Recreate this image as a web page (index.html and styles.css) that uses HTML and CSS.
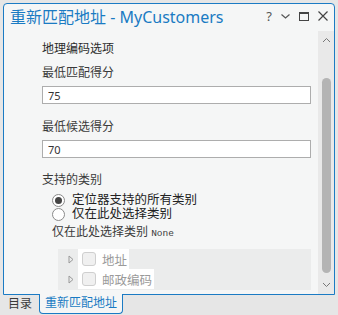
FILE: index.html
```html
<!DOCTYPE html>
<html>
<head>
  <title>重新匹配地址</title>
  <link rel="stylesheet" href="styles.css">
</head>
<body>
  <div class="pane">
    <div class="title-bar">
      <div class="title">重新匹配地址 - MyCustomers</div>
      <div class="title-tools">
        <span class="tool-help">?</span>
        <svg class="tool" width="9" height="10" viewBox="0 0 9 10"><path d="M0.5 3.5 L4.5 7 L8.5 3.5" fill="none" stroke="#555" stroke-width="1.2"/></svg>
        <svg class="tool" width="10" height="10" viewBox="0 0 10 10"><rect x="0.5" y="1.5" width="9" height="8" fill="none" stroke="#444" stroke-width="1"/><rect x="0.5" y="1" width="9" height="2" fill="#444"/></svg>
        <svg class="tool" width="10" height="10" viewBox="0 0 10 10"><path d="M0.5 0.5 L9.5 9.5 M9.5 0.5 L0.5 9.5" fill="none" stroke="#444" stroke-width="1.2"/></svg>
      </div>
    </div>

    <div class="pane-body">
      <div class="content">
        <div class="section-title">地理编码选项</div>

        <div class="field-label">最低匹配得分</div>
        <input class="field-input" type="text" value="75">

        <div class="field-label second">最低候选得分</div>
        <input class="field-input" type="text" value="70">

        <div class="field-label third">支持的类别</div>
        <div class="radio-list">
          <label class="radio-row"><span class="radio checked"></span>定位器支持的所有类别</label>
          <label class="radio-row"><span class="radio"></span>仅在此处选择类别</label>
        </div>
        <div class="selected-line">仅在此处选择类别 <span class="mono">None</span></div>

        <div class="tree">
          <div class="tree-row">
            <svg class="expander" width="6" height="9" viewBox="0 0 6 9"><path d="M1 1 L5 4.5 L1 8 Z" fill="none" stroke="#9a9a9a" stroke-width="1"/></svg>
            <div class="tree-item"><span class="checkbox"></span>地址</div>
          </div>
          <div class="tree-row">
            <svg class="expander" width="6" height="9" viewBox="0 0 6 9"><path d="M1 1 L5 4.5 L1 8 Z" fill="none" stroke="#9a9a9a" stroke-width="1"/></svg>
            <div class="tree-item"><span class="checkbox"></span>邮政编码</div>
          </div>
        </div>
      </div>

      <div class="scrollbar">
        <svg class="scroll-arrow" width="9" height="6" viewBox="0 0 9 6"><path d="M1 5 L4.5 1.5 L8 5" fill="none" stroke="#777" stroke-width="1"/></svg>
        <div class="scroll-track"><div class="scroll-thumb"></div></div>
        <svg class="scroll-arrow" width="9" height="6" viewBox="0 0 9 6"><path d="M1 1 L4.5 4.5 L8 1" fill="none" stroke="#777" stroke-width="1"/></svg>
      </div>
    </div>
  </div>

  <div class="tabs">
    <div class="tab">目录</div>
    <div class="tab active">重新匹配地址</div>
  </div>
</body>
</html>
```

FILE: styles.css
```css
body {
  margin: 0;
  width: 338px;
  height: 315px;
  overflow: hidden;
  background-color: #e6e6e6;
  font-family: "Noto Sans", "Noto Sans CJK SC", sans-serif;
  color: #2b2b2b;
}

.pane {
  margin: 3px 3px 0 3px;
  height: 292px;
  box-sizing: border-box;
  border: 1px solid #1b7bc4;
  border-radius: 4px 4px 0 0;
  background-color: #f5f6f6;
  display: flex;
  flex-direction: column;
}

.title-bar {
  height: 27px;
  display: flex;
  align-items: center;
  justify-content: space-between;
  padding: 0 6px 0 6px;
}

.title {
  font-size: 16px;
  color: #1a7bc3;
  line-height: 20px;
  margin-top: -2px;
}

.title-tools {
  display: flex;
  align-items: center;
  gap: 9px;
  margin-top: -4px;
}

.tool-help {
  font-size: 13px;
  line-height: 14px;
  color: #555;
}

.pane-body {
  flex: 1;
  display: flex;
  min-height: 0;
}

.content {
  flex: 1;
  padding: 0 7px 0 38px;
}

.section-title {
  margin-top: 10px;
  font-size: 12px;
  line-height: 16px;
}

.field-label {
  margin-top: 8px;
  font-size: 12px;
  line-height: 16px;
  color: #3a3a3a;
}

.field-label.second {
  margin-top: 15px;
}

.field-label.third {
  margin-top: 14px;
}

.field-input {
  display: block;
  width: 100%;
  height: 18px;
  margin-top: 5px;
  padding: 0 5px;
  box-sizing: border-box;
  border: 1px solid #adadad;
  background-color: #fff;
  font-family: "Noto Sans", sans-serif;
  font-size: 11px;
  color: #333;
  outline: none;
}

.radio-list {
  margin-top: 5px;
  padding-left: 10px;
}

.radio-row {
  display: flex;
  align-items: center;
  height: 14px;
  line-height: 14px;
  font-size: 12.5px;
  color: #222;
}

.radio {
  width: 11px;
  height: 11px;
  border: 1px solid #8a8a8a;
  border-radius: 50%;
  background-color: #fff;
  margin-right: 7px;
  display: flex;
  align-items: center;
  justify-content: center;
}

.radio.checked::after {
  content: "";
  width: 7px;
  height: 7px;
  border-radius: 50%;
  background-color: #444;
}

.selected-line {
  margin-top: 3px;
  padding-left: 10px;
  font-size: 12px;
  line-height: 16px;
  color: #3a3a3a;
}

.mono {
  font-family: "Liberation Mono", monospace;
  font-size: 9.5px;
}

.tree {
  margin: 7px 0 0 16px;
  height: 41px;
  padding-left: 10px;
  background-color: #ebecec;
}

.tree-row {
  display: flex;
  align-items: center;
  height: 20px;
}

.expander {
  margin-right: 4px;
}

.tree-item {
  display: flex;
  align-items: center;
  height: 20px;
  padding: 0 2px 0 4px;
  background-color: #fff;
  font-size: 12.5px;
  color: #9a9a9a;
}

.checkbox {
  width: 12px;
  height: 12px;
  border: 1px solid #cfcfcf;
  border-radius: 3px;
  background-color: #f0f0f0;
  margin-right: 6px;
}

.scrollbar {
  width: 16px;
  background-color: #e9e9e9;
  display: flex;
  flex-direction: column;
  align-items: center;
}

.scroll-arrow {
  margin: 6px 0;
}

.scroll-track {
  flex: 1;
  width: 100%;
  display: flex;
  justify-content: center;
  padding-top: 29px;
}

.scroll-thumb {
  width: 9px;
  height: 195px;
  border-radius: 5px;
  background-color: #b4b4b4;
}

.tabs {
  display: flex;
  padding-left: 4px;
  height: 20px;
}

.tab {
  font-size: 12px;
  line-height: 18px;
  padding: 0 4px;
  color: #3a3a3a;
}

.tab.active {
  margin-left: 3px;
  margin-top: -1px;
  height: 19px;
  padding: 0 5px;
  color: #1a7bc3;
  background-color: #f5f6f6;
  border: 1px solid #1b7bc4;
  border-top: none;
  border-radius: 0 0 4px 4px;
}
```
